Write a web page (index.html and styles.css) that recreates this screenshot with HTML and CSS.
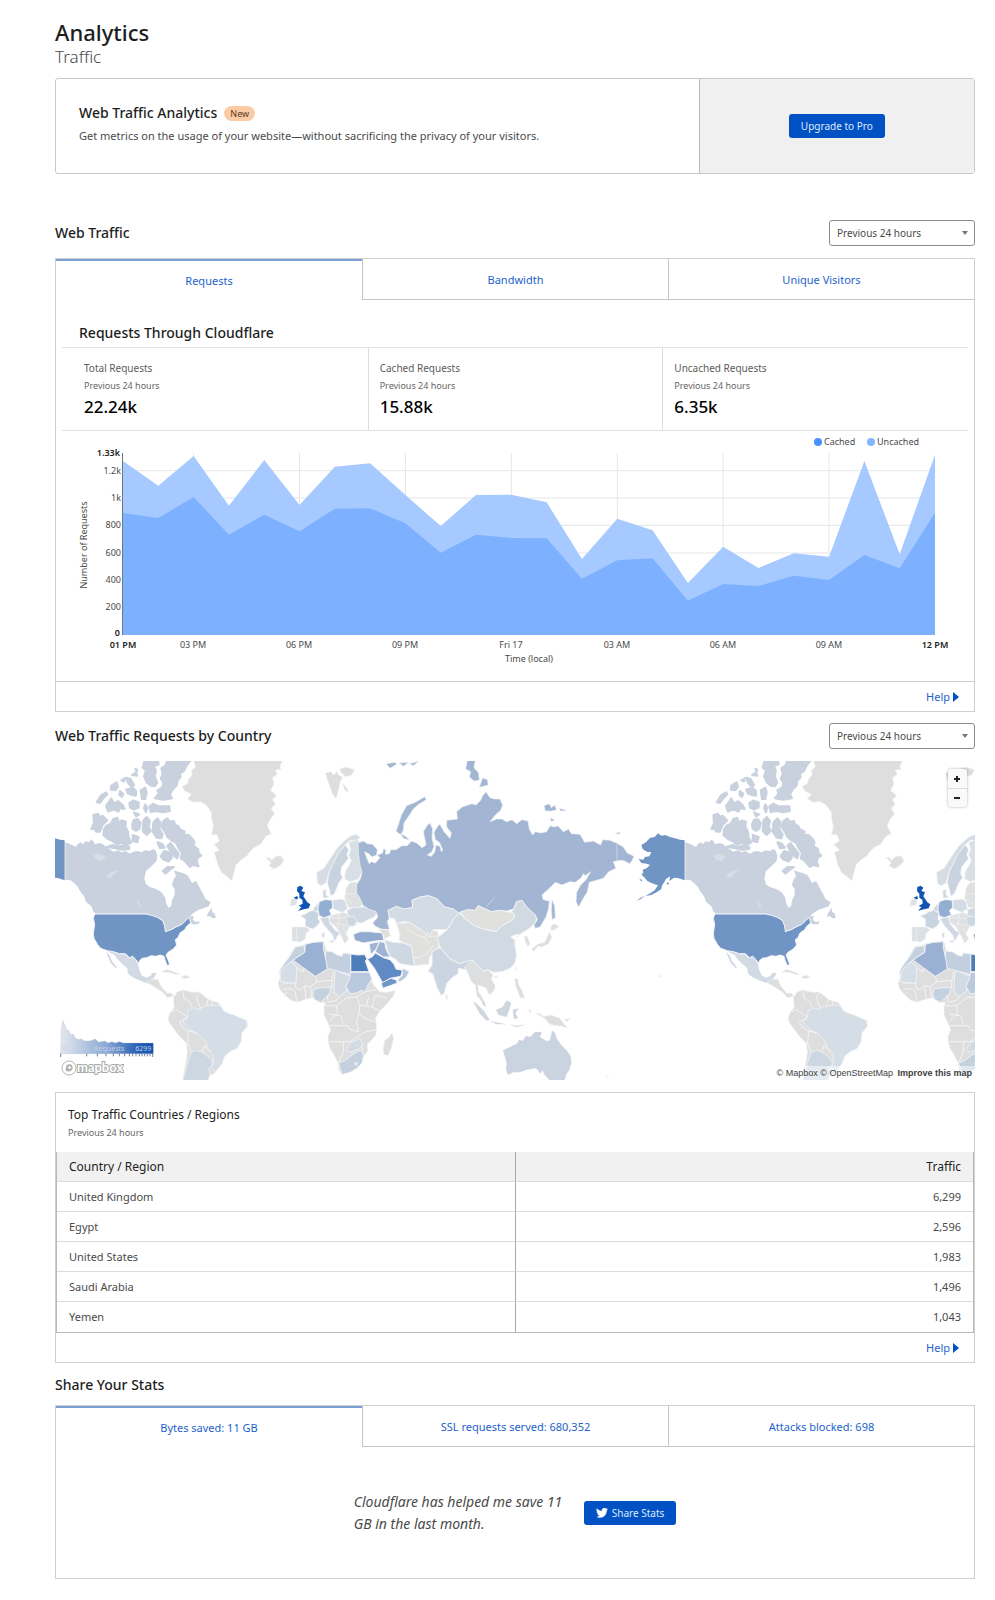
FILE: index.html
```html
<!DOCTYPE html>
<html lang="en">
<head>
  <meta charset="UTF-8" />
  <meta name="viewport" content="width=device-width, initial-scale=1.0"/>
  <title>Analytics | Traffic</title>
  <link rel="stylesheet" href="styles.css">
</head>
<body>
  <main class="page">
    <header class="page-header">
      <h1>Analytics</h1>
      <p class="subtitle">Traffic</p>
    </header>

    <section class="promo">
      <div class="promo-text">
        <h2>Web Traffic Analytics <span class="badge">New</span></h2>
        <p>Get metrics on the usage of your website—without sacrificing the privacy of your visitors.</p>
      </div>
      <div class="promo-action">
        <button class="btn" type="button">Upgrade to Pro</button>
      </div>
    </section>

    <div class="section-head">
      <h2>Web Traffic</h2>
      <div class="select">
        <select aria-label="Web traffic period">
          <option>Previous 24 hours</option>
        </select>
      </div>
    </div>

    <section class="panel">
      <div class="tabs">
        <button class="tab active" type="button">Requests</button>
        <button class="tab" type="button">Bandwidth</button>
        <button class="tab" type="button">Unique Visitors</button>
      </div>
      <h3 class="panel-title">Requests Through Cloudflare</h3>
      <div class="stats">
        <div class="stat">
          <p class="stat-label">Total Requests</p>
          <p class="small">Previous 24 hours</p>
          <p class="stat-value">22.24k</p>
        </div>
        <div class="stat">
          <p class="stat-label">Cached Requests</p>
          <p class="small">Previous 24 hours</p>
          <p class="stat-value">15.88k</p>
        </div>
        <div class="stat">
          <p class="stat-label">Uncached Requests</p>
          <p class="small">Previous 24 hours</p>
          <p class="stat-value">6.35k</p>
        </div>
      </div>

      <svg class="chart" viewBox="0 0 918 250" role="img" aria-label="Requests over time">
        <circle cx="762" cy="11" r="4" fill="#4693ff"/>
        <text x="768" y="14">Cached</text>
        <circle cx="815" cy="11" r="4" fill="#82b6ff"/>
        <text x="821" y="14">Uncached</text>

        <!-- plot area, one hour is 106 units wide -->
        <svg x="67" y="22" width="812" height="182" viewBox="0 0 2438 546" preserveAspectRatio="none">
          <path class="grid" d="M0 53H2438M0 135H2438M0 217H2438M0 300H2438M212 0V546M530 0V546M848 0V546M1166 0V546M1484 0V546M1802 0V546M2120 0V546"/>
          <path fill="#a6c9ff" d="M0 24L106 98 212 9 318 158 424 21 530 156 636 41 742 31 848 126 954 219 1060 126 1166 125 1272 148 1378 318 1484 197 1590 232 1696 390 1802 281 1908 345 2014 301 2120 311 2226 24 2332 304 2438 5V546H0z"/>
          <path fill="#7db1ff" d="M0 180L106 195 212 132 318 245 424 185 530 235 636 167 742 166 848 211 954 299 1060 245 1166 255 1272 256 1378 377 1484 322 1590 316 1696 443 1802 393 1908 399 2014 368 2120 381 2226 306 2332 346 2438 179V546H0z"/>
        </svg>
        <path d="M66.500 22V204" stroke="#6b7785"/>

        <g text-anchor="end">
          <text class="strong" x="64" y="25">1.33k</text>
          <text x="65" y="43">1.2k</text>
          <text x="65" y="70">1k</text>
          <text x="65" y="97">800</text>
          <text x="65" y="125">600</text>
          <text x="65" y="152">400</text>
          <text x="65" y="179">200</text>
          <text class="strong" x="64" y="205">0</text>
        </g>
        <g text-anchor="middle">
          <text class="strong" x="67" y="217">01 PM</text>
          <text x="137" y="217">03 PM</text>
          <text x="243" y="217">06 PM</text>
          <text x="349" y="217">09 PM</text>
          <text x="455" y="217">Fri 17</text>
          <text x="561" y="217">03 AM</text>
          <text x="667" y="217">06 AM</text>
          <text x="773" y="217">09 AM</text>
          <text class="strong" x="879" y="217">12 PM</text>
          <text x="473" y="231">Time (local)</text>
          <text transform="translate(31 114) rotate(-90)">Number of Requests</text>
        </g>
      </svg>

      <div class="panel-foot"><a class="help" href="#">Help</a></div>
    </section>

    <div class="section-head country-head">
      <h2>Web Traffic Requests by Country</h2>
      <div class="select">
        <select aria-label="Country traffic period">
          <option>Previous 24 hours</option>
        </select>
      </div>
    </div>

    <div class="map">
      <svg class="map-canvas" viewBox="15 18 2760 957" role="img" aria-label="Requests by country">
        <defs>
          <!-- one full turn of the globe is 1860 units wide -->
          <g id="world" stroke-linejoin="round">
            <g fill="#c8d1dd">
              <path d="M46 262L62 268 78 276 84 266 94 262 98 268 108 258 116 262 124 254 130 258 135 268 146 264 158 266 166 274 178 282 190 290 205 286 214 292 226 288 240 296 250 290 262 288 275 292 285 286 300 288 310 282 316 286 322 300 320 318 304 334 288 348 283 370 288 388 300 396 318 402 335 412 346 428 349 446 356 458 364 452 366 436 374 420 374 402 366 390 370 374 378 364 372 346 384 350 398 354 412 360 418 370 426 384 438 378 446 392 452 404 460 418 466 432 482 442 476 454 460 460 446 464 430 474 420 484 432 484 428 494 438 502 450 498 444 508 428 508 418 498 412 490 396 508 380 514 366 522 346 530 344 512 338 496 322 486 300 480 288 476H140L130 470 124 454 108 440 102 424 90 408 84 396 72 384 62 376 46 374z"/>
              <path d="M470 484L476 472 486 458 486 470 494 476 498 488 488 490 480 484z"/>
              <g stroke="#c8d1dd" stroke-width="6">
                <path d="M340 198L352 190 360 200 372 198 376 210 384 212 390 222 404 230 402 240 416 240 428 252 434 262 430 272 444 282 446 294 454 302 444 308 440 320 446 334 430 330 420 336 404 318 392 310 396 294 386 280 378 264 364 256 352 246 346 232 334 216z"/>
                <path d="M162 222L170 212 182 206 190 192 202 188 206 202 216 196 228 200 226 214 234 230 236 248 244 262 228 272 216 262 202 270 190 260 174 252 160 240z"/>
                <path d="M130 180L144 176 150 186 158 182 172 196 158 210 150 230 138 230 134 222 124 222 132 204z"/>
                <path d="M246 208L252 194 264 192 272 204 268 222 258 228 248 222zM280 196L290 186 300 198 296 214 302 228 290 240 278 228zM310 202L322 190 332 202 328 222 338 238 334 250 320 248 308 230z"/>
                <path d="M168 152L176 142 184 130 192 146 204 138 218 150 224 162 208 160 206 170 190 164 174 170z"/>
                <path d="M352 16H422L410 32 402 48 390 56 392 66 382 78 380 92 368 104 360 118 366 130 340 134 314 130 326 116 322 106 336 98 340 84 332 70 338 58 334 40 346 32z"/>
                <path d="M284 16H324L326 28 312 34 318 48 314 62 322 84 314 94 302 92 290 82 282 64 288 46 278 38z"/>
                <path d="M298 154L310 146 326 154 358 154 360 168 340 172 316 168 302 172zM228 68L242 72 252 90 246 96 234 84zM184 92L200 82 204 96 196 106 182 104zM140 142L152 122 168 112 172 118 160 130 150 144zM228 104L248 98 258 108 258 122 246 120 234 116zM272 106L286 98 290 112 286 132 276 132zM238 144L250 136 266 142 266 158 252 164 240 158zM332 304L342 288 356 292 366 308 356 320 340 314zM352 272L362 264 372 278 386 296 382 310 368 300zM248 240L266 246 262 262 248 258zM170 276L188 270 204 276 222 270 238 276 238 282 216 284 196 280zM256 42L262 44 260 50z"/>
                <path d="M246 60L258 52 262 62zM286 148L292 158 288 172 282 160zM210 108L220 116 216 126 208 120zM214 76L224 70 222 80zM338 348L352 336 372 336 360 344 346 356zM322 262L336 266 344 278 330 280zM252 172L268 178 258 184z"/>
              </g>
            </g>
            <path fill="#d5dde5" d="M130 302L144 294 154 300 168 304 156 318 140 316zM168 362L184 350 208 344 192 358 180 370zM260 434L266 438 276 458 268 456z"/>
            <path fill="#7095c4" stroke="#f4f6fa" stroke-width="3" d="M134 477H288L304 481 322 487 338 497 344 513 346 530 366 523 380 515 396 508 412 492 418 487 422 504 410 514 404 524 390 534 384 548 376 554 380 570 370 582 354 592 348 600 354 614 359 628 352 632 346 618 342 604 330 600 318 604 304 602 290 608 276 610 268 618 266 626 258 614 248 604 238 608 226 596H208L190 590 172 587 152 580 142 568 132 550 130 536 134 508 130 490z"/>
            <path fill="#d2dae4" d="M172 589L190 592 208 598H224L236 610 248 606 256 614 264 628 268 646 276 662 290 668 302 662 306 654 320 654 312 668 302 680 288 684 268 676 250 668 234 656 232 640 216 626 202 612 194 600zM168 590L180 602 186 618 202 638 196 638 182 624z"/>
            <g fill="#dedede" stroke="#f6f6f6" stroke-width="2">
              <path d="M290 684L304 674 324 672 330 688 338 700 350 714 364 714 372 724 352 728 338 712 322 702 304 690z"/>
              <path d="M334 652L350 643 372 650 394 660 376 658 354 652zM392 666L408 660 422 667 404 672z"/>
              <path d="M430 16H698L690 34 694 42 676 46 682 58 668 68 672 88 662 106 680 122 668 134 676 148 664 160 674 176 660 194 652 212 664 236 648 244 632 268 612 278 598 292 592 302 574 314 558 330 552 354 546 378 532 366 514 352 504 332 498 310 492 292 508 286 492 268 508 258 500 238 484 240 490 214 484 190 484 172 468 150 450 140 430 142 412 132 424 118 404 108 396 94 412 86 416 72 426 60 424 46 436 36z"/>
              <path d="M646 306L660 308 664 316 678 304 694 302 702 318 690 332 672 342 656 332 664 324z"/>
              <path d="M826 54L842 50 852 60 860 48 866 60 878 66 870 84 866 104 858 132 846 114 840 96 832 74zM868 42L888 36 914 44 906 60 888 66 874 54zM878 84L890 98 896 112 884 106z"/>
              <path d="M370 728L380 712 398 704 412 708 430 712 446 710 460 720 474 732 488 738 504 742 512 752 520 766 534 776 552 780 570 788 590 796 592 814 576 834 574 858 562 880 540 890 524 904 516 926 504 942 490 958 478 960 474 977H398L402 950 408 920 412 890 408 864 392 848 374 826 358 804 354 790 360 772 372 758z"/>
            </g>
            <path fill="#d5dee6" stroke="#f6f6f6" stroke-width="2" d="M414 768L430 758 448 764 462 754 480 752 500 750 512 754 524 770 552 780 570 788 590 796 592 814 576 834 574 858 562 880 540 890 524 904 516 926 504 942 496 950 484 938 492 916 488 898 474 884 468 864 452 844 436 832 420 824 404 808 398 796 412 786z"/>
            <path fill="#cdd7e2" stroke="#f6f6f6" stroke-width="2" d="M424 892L440 886 456 892 470 902 484 914 488 928 476 940 480 958 474 977H398L406 950 414 920z"/>
            <path fill="none" stroke="#f3f3f3" stroke-width="3" d="M398 706L402 730 420 740 424 758M446 712L440 730 452 760M474 734L470 752M488 740L486 750M360 772L378 764 412 786M412 790L388 800 400 820 416 828 412 870M416 828L440 834M412 862L424 892M456 892L462 872 484 890"/>

            <g fill="#dedede" stroke="#f4f4f4" stroke-width="2">
              <path d="M736 574L752 572 768 566 790 562 822 560 826 576 830 588 846 590 862 600 876 604 880 594 900 596 920 598 944 600 956 648 962 668 968 686 980 700 990 710 1010 712 1036 706 1030 724 1010 748 990 768 976 790 980 812 978 840 964 856 952 868 954 888 940 904 936 924 920 940 900 952 876 958 866 944 864 924 854 904 840 880 834 860 834 844 842 824 832 800 822 780 822 756 826 742 806 742 790 728 770 732 740 742 722 736 704 720 690 704 684 686 690 668 688 650 700 630 714 612 722 594z"/>
              <path d="M1004 856L1016 848 1026 834 1031 850 1024 880 1014 902 1000 898 1000 880z"/>
            </g>
            <path fill="none" stroke="#f4f4f4" stroke-width="3" d="M740 640L760 650 762 638 796 664 800 680 780 696 764 692 752 704 738 700 736 684 700 684M700 704L720 700 736 710 740 740M764 692L768 732M782 698L784 728M800 680L846 676 852 650M846 676L844 698M844 700L832 728 836 742 860 736 868 722M826 752H860L890 728 920 726 946 710 980 704M860 752L862 776 838 800M920 726L930 750 926 776 944 790 976 800M926 776L920 800 926 830 900 824 894 812 840 812M836 860H900L926 842 950 830 980 824M880 860V890L866 924M900 860L920 866 940 870M930 750L966 756 990 768M966 756L976 720 1010 730M940 884L930 866M838 778L872 782 880 806M956 724L950 750M700 722L712 712"/>
            <g stroke="#eef1f5" stroke-width="3">
              <path fill="#4e7dbb" d="M902 597L922 600 944 599 951 612 946 618 957 650H902z"/>
              <path fill="#c3cfdf" d="M826 588L846 590 862 600 876 604 880 594 902 597V658L862 648 832 640 826 620z"/>
              <path fill="#9ab1d3" d="M766 568L790 562 820 560 820 578 828 616 832 642 796 664 760 638 730 616 742 606 764 592z"/>
              <path fill="#c6d1df" d="M736 576L762 572 764 592 742 606 728 616 712 630 700 650 688 650 700 630 722 600z"/>
              <path fill="#d5dde6" d="M706 634L722 620 740 636 738 684 702 682 690 678 694 650z"/>
              <path fill="#c6d1df" d="M792 702L812 698 844 698 838 716 826 728 812 742 794 734 788 720z"/>
              <path fill="#d2dbe4" d="M856 646L902 664 892 690 890 708 868 724 852 712V690z"/>
              <path fill="#bbc9df" d="M902 652H958L966 672 954 690 946 710 934 706 920 714 900 716 888 694 898 672z"/>
              <path fill="#c5d0df" d="M866 924L886 916 906 900 934 884 940 904 936 924 920 940 900 952 876 958z"/>
              <path fill="#d2dae4" d="M888 884L904 862 930 850 938 868 926 882 900 892z"/>
            </g>
            <circle cx="918" cy="926" r="6" fill="#e2e7ed"/>

            <path fill="#1254b4" d="M742 396L752 392 760 398 754 408 765 412 760 424 768 436 772 442 781 448 776 460 762 463 744 467 754 457 746 452 758 446 757 434 748 428 748 416 741 408zM731 428L742 423 744 431 736 434z"/>
            <g fill="#dfe0e1" stroke="#f4f4f4" stroke-width="2">
              <path d="M722 436L732 430 742 436 738 450 720 454z"/>
              <path d="M888 400L898 384 916 380 936 400 942 446 924 460 896 458 884 430z"/>
              <path d="M842 482L880 472 912 488 920 510 898 516 888 536 896 552 884 566 872 540 858 516 838 500z"/>
            </g>
            <g stroke="#f1f3f6" stroke-width="2">
              <path fill="#d5dce4" d="M800 352L822 340 836 318 848 300 864 276 880 260 900 244 918 238 930 246 920 256 900 256 886 268 874 284 862 300 850 326 838 348 832 370 828 384 812 392 802 384z"/>
              <path fill="#c9d3df" d="M886 270L896 284 890 300 896 310 884 324 874 338 872 356 878 368 866 384 860 400 852 418 842 422 838 402 832 384 838 350 850 326 862 300 874 284z"/>
              <path fill="#d8dfe5" d="M896 262L920 254 930 262V290L934 310 940 340 926 372 900 380 884 372 886 348 898 330 904 316 896 300 902 284z"/>
              <path fill="#cfd8e2" d="M818 408L828 402 828 420 838 426 820 430zM790 462L804 444V468L796 472z"/>
              <path fill="#93aed3" d="M808 440L826 434 846 436 848 458 838 466 844 480 822 488 808 482 804 460z"/>
              <path fill="#c9d4e1" d="M790 466L806 474 804 492 810 500 802 512 788 522 766 514V492L750 482 766 478 774 472z"/>
              <path fill="#dbe0e5" d="M726 516L768 516 780 524 768 536 766 552 750 562 736 558 726 560V540z"/>
              <path fill="#d3dbe4" d="M848 436L876 432 888 440 892 462 876 472 850 462z"/>
              <path fill="#cfd8e3" d="M892 464L912 458 940 456 960 462 980 470 974 486 950 496 936 504 920 502 912 488 892 480z"/>
              <path fill="#d0d9e3" d="M810 490L836 486 840 506 856 526 870 534 862 544 854 560 848 540 834 524 820 508zM816 534L824 534 822 548 816 546zM836 558L852 556 848 564z"/>
              <path fill="#cdd7e2" d="M888 486L912 484 920 500 912 514 894 512z"/>
            </g>
            <path fill="none" stroke="#f4f4f4" stroke-width="2" d="M740 520V556M890 418L926 416M846 488L884 490M856 506L892 512M876 520L888 530M868 476L864 520M890 430L906 446"/>

            <!-- Asia, Oceania and Alaska -->
            <g transform="translate(900 0)">
              <g fill="#a2b5d2" stroke="#eef1f5" stroke-width="2">
                <path d="M24 264L40 258 52 266 68 268 82 284 80 300 66 306 56 296 44 290 50 308 58 326 64 320 76 324 90 308 82 300 98 294 100 282 108 284 106 298 118 296 122 284 138 284 156 272 172 272 184 258 200 264 216 278 228 270 224 250 220 230 232 210 240 204 248 222 246 250 252 274 246 290 232 300 244 304 254 292 258 270 270 274 274 290 278 284 268 262 256 254 252 232 264 212 270 208 282 230 300 250 304 234 290 216V196L322 192 320 170 336 156 366 146 378 150 392 136 398 122 408 110 420 128 434 132 450 132 458 150 452 166 436 180 420 200 440 192 456 192 470 200 486 194 500 206 516 194 534 198 538 222 548 240 556 230 572 234 590 230 600 212 614 216 624 212 640 230 656 222 664 236 690 238 704 262 730 258 752 270 758 254 780 256 800 264 820 276 832 294 852 304 846 318 838 326 824 318 812 316 790 320 798 340 776 350 760 370 740 376 718 382 712 410 700 430 686 456 678 440 680 412 692 390 708 374 722 350 706 362 700 356 694 368 676 382 660 380 636 390 616 382 596 402 576 420 580 434 598 438 596 460 588 486 570 516 556 520 552 510 562 494 556 480 530 456 516 436 500 440 490 462 470 468 450 466 424 470 402 460 384 452 376 466 352 464 326 474 310 462 284 456 262 432 236 422 210 426 186 436 188 458 160 462 140 454 114 466 118 488 112 500 118 522 106 528 76 514 68 504 84 486 78 470 56 462 40 452 30 430 20 414V388L32 370 36 350 30 330 26 300z"/>
                <path d="M224 125L229 134 206 148 190 162 176 184 162 204 160 226 152 240 138 228 146 206 154 180 170 152 196 142zM152 236L170 246 178 256 160 250zM352 16H376L372 38 386 54 388 76 372 78 358 66 362 50 347 42zM388 97L398 68 412 74 415 90zM582 152L598 146 604 158 614 150 620 164 606 168 586 168zM628 160L650 166 632 169zM600 188L614 194 604 200zM796 234L814 231 806 238zM606 434L614 452 616 488 606 494 604 460zM108 26L136 22 140 28 120 40zM148 24L176 22 160 34zM178 26L206 19 190 32z"/>
              </g>
              <path stroke="#dfe5ee" stroke-width="2" d="M801 266V320M410 454L436 426"/>
              <g stroke="#f1f3f6" stroke-width="3">
                <path fill="#e0e0df" d="M84 522L116 524 122 542 104 552 96 534zM140 506L180 502 214 524 262 528 270 560 260 590 240 604 236 628 194 632 188 600 184 572 160 562 146 556 150 540z"/>
                <path fill="#d3dce4" d="M114 466L140 454 160 462 188 458 186 436 210 426 236 422 262 432 284 456 310 462 326 474 312 490 300 510 290 524 250 524 236 544 214 524 200 516 180 502 158 500 140 506 134 492 118 488z"/>
                <path fill="#d1dae3" d="M312 490L328 474 344 490 372 512 400 522 440 530 456 512 480 500 494 486 480 474 492 462 500 440 516 436 530 456 556 480 560 496 550 510 530 526 512 536 500 548 508 538 494 540 482 546 496 556 494 566 500 600 494 626 480 640 456 650 430 652 414 644 396 650 386 634 370 620 350 624 330 626 300 612 284 594 270 576 262 548 290 526 302 508z"/>
                <path fill="#e0e0df" d="M330 472L352 464 376 466 384 452 402 460 424 470 450 466 490 474 494 486 480 500 456 512 440 530 400 522 372 512 346 490z"/>
                <path fill="#cbd5e1" d="M246 590L270 578 284 594 300 612 330 626 360 616 372 618 360 636 346 644 326 640 324 656 304 670 290 686 284 712 274 722 262 700 254 676 248 656 234 650 246 630z"/>
                <path fill="#ced8e2" d="M104 554L130 562 160 564 184 574 190 610 194 632 172 630 150 626 136 612 120 604 112 584z"/>
                <path fill="#93abd0" d="M10 538L30 530H60L96 534 102 556 76 558 40 564 14 556z"/>
                <path fill="#a0b5d5" d="M58 566L88 560 80 580 62 600zM88 560L104 562 108 582 120 606 100 606 76 590z"/>
                <path fill="#5f8ac3" d="M52 612L66 606 76 594 100 608 120 614 132 628 138 642 158 646 152 664 120 670 98 684 86 662 72 638z"/>
                <path fill="#6f96c9" d="M94 684L122 670 138 674 142 684 126 690 98 700z"/>
                <path fill="#b9c8de" d="M142 676L156 662 158 640 178 650 168 668 150 680z"/>
              </g>
              <path fill="none" stroke="#f1f1f1" stroke-width="3" d="M166 516L200 540 224 548 236 566M190 608L214 606 236 590 250 570M236 544L270 542M224 548L236 530"/>
              <g fill="#dddedf" stroke="#f6f6f6" stroke-width="2">
                <path d="M344 636L356 624 372 620 386 636 400 650 414 644 430 660 424 672 436 692 432 708 418 720 408 700 394 694 384 690 386 710 400 732 396 740 380 722 376 690 364 680 356 660z"/>
                <path d="M286 714L294 726 289 736zM604 512L612 506 628 514 612 526 600 524zM598 530L606 546 596 566 576 576 564 574 550 590 545 582 562 568 584 562zM522 544L532 544 541 568 532 574 526 560zM498 634L502 644 497 648zM432 664L444 662 438 670zM494 670L504 672 506 688 516 706 524 730 510 728 502 706 496 690zM536 762L544 766 540 778zM556 774L570 776 580 784 604 780 630 790 640 804 654 820 636 814 616 812 598 808 586 792zM640 794L662 790 652 800zM924 658L932 664 926 667zM766 958L776 972 770 968z"/>
              </g>
              <path fill="#cfd6df" d="M368 738L380 746 402 768 420 796 408 796 390 776zM392 730L404 740 408 758 398 748zM418 798L450 804 470 808 440 808zM438 764L458 756 470 736 484 744 478 764 470 786 446 780zM488 764L506 760 496 774 504 790 492 792zM476 808L500 812 530 808 500 816z"/>
              <path fill="#cad4e1" d="M459 886L480 876 500 866 508 854 518 858 528 842 540 846 556 830 576 832 570 846 590 858 600 856 606 827 614 832 620 850 634 870 650 886 662 904 664 924 658 944 648 960 644 975H598L584 960 578 946 572 956 558 940 530 944 510 952 490 952 474 960 468 944 470 924z"/>
              <path fill="#7095c4" d="M1004 256L990 254 975 250 960 246 946 240 934 242 924 235 914 246 900 248 888 262 874 270 878 282 890 290 904 292 898 304 884 306 880 314 866 312 874 324 890 326 900 330 890 340 878 344 880 354 874 358 884 368 892 378 904 384 914 388 924 391 914 406 902 414 886 423 904 420 920 412 934 402 936 392 948 372 960 364 958 378 972 368 986 370 1004 376z"/>
              <path fill="#7095c4" d="M884 422L870 430 860 438 874 431zM868 372L876 374 874 380zM950 382L958 384 952 390z"/>
            </g>
          </g>
        </defs>
        <use href="#world" x="-1860"/>
        <use href="#world"/>
        <use href="#world" x="1860"/>
      </svg>

      <div class="zoom">
        <button type="button" aria-label="Zoom in"><svg viewBox="0 0 10 10"><path d="M5 2V8M2 5H8"/></svg></button>
        <button type="button" aria-label="Zoom out"><svg viewBox="0 0 10 10"><path d="M2 5H8"/></svg></button>
      </div>

      <div class="map-corner">
        <svg class="scale" width="94" height="40" viewBox="0 0 282 120">
          <defs>
            <linearGradient id="ramp">
              <stop offset="0" stop-color="#e3e7ed"/>
              <stop offset=".5" stop-color="#89a8d5"/>
              <stop offset=".8" stop-color="#2c65b9"/>
              <stop offset="1" stop-color="#0f4eae"/>
            </linearGradient>
          </defs>
          <path fill="url(#ramp)" stroke="#a9b5c6" stroke-width="1" d="M2 104L4 36 8 4 14 18 20 34 26 34 32 48 40 46 46 58 56 62 64 60 72 66 90 66 106 60 116 70 134 66 144 72 156 68 166 72 178 68 190 72H280V104z"/>
          <path stroke="#24406c" stroke-width="2" d="M2 104V114M80 104V112M112 104V112M138 104V112M160 104V112M178 104V112M194 104V112M208 104V112M218 104V112M228 104V112M238 104V112M246 104V112M254 104V112M262 104V112M270 104V112M278 104V114"/>
          <g class="scale-text">
            <text x="8" y="96">0</text>
            <text x="148" y="96" text-anchor="middle">Requests</text>
            <text x="274" y="96" text-anchor="end">6299</text>
          </g>
        </svg>
        <a class="mapbox" href="#" aria-label="Mapbox">
          <svg width="64" height="18" viewBox="0 0 64 18">
            <circle cx="9" cy="9" r="7" fill="#fff" stroke="#b4b4b4"/>
            <path d="M6 12C5 6 8 4.500 11 5.500 14 7.500 12.500 11.500 10 12.200 8.500 12.600 7 12.400 6 12z" fill="#b0b0b0"/>
            <path d="M9.600 6.200L10.300 7.800 11.900 8.500 10.300 9.200 9.600 10.800 8.900 9.200 7.300 8.500 8.900 7.800z" fill="#fff"/>
            <text x="17" y="13">mapbox</text>
          </svg>
        </a>
      </div>

      <p class="attribution"><a href="#">© Mapbox</a> <a href="#">© OpenStreetMap</a> <a class="improve" href="#">Improve this map</a></p>
    </div>

    <section class="panel countries">
      <div class="countries-head">
        <h3>Top Traffic Countries / Regions</h3>
        <p class="small">Previous 24 hours</p>
      </div>
      <table>
        <thead>
          <tr><th scope="col">Country / Region</th><th scope="col">Traffic</th></tr>
        </thead>
        <tbody>
          <tr><td>United Kingdom</td><td>6,299</td></tr>
          <tr><td>Egypt</td><td>2,596</td></tr>
          <tr><td>United States</td><td>1,983</td></tr>
          <tr><td>Saudi Arabia</td><td>1,496</td></tr>
          <tr><td>Yemen</td><td>1,043</td></tr>
        </tbody>
      </table>
      <div class="panel-foot"><a class="help" href="#">Help</a></div>
    </section>

    <h2 class="share-title">Share Your Stats</h2>
    <section class="panel">
      <div class="tabs">
        <button class="tab active" type="button">Bytes saved: 11 GB</button>
        <button class="tab" type="button">SSL requests served: 680,352</button>
        <button class="tab" type="button">Attacks blocked: 698</button>
      </div>
      <div class="share">
        <p>Cloudflare has helped me save 11 GB in the last month.</p>
        <button class="btn" type="button">
          <svg width="12" height="10" viewBox="0 0 24 20"><path fill="#fff" d="M24 2.400a9.800 9.800 0 0 1-2.800.8A4.900 4.900 0 0 0 23.300.4a9.900 9.900 0 0 1-3.100 1.200 4.900 4.900 0 0 0-8.400 4.500A14 14 0 0 1 1.700.9a4.900 4.900 0 0 0 1.500 6.600 4.900 4.900 0 0 1-2.200-.6v.1a4.900 4.900 0 0 0 3.900 4.800 4.900 4.900 0 0 1-2.200.1 4.900 4.900 0 0 0 4.600 3.400A9.900 9.900 0 0 1 0 17.300a14 14 0 0 0 7.500 2.200c9.100 0 14.300-7.700 14-14.600A10 10 0 0 0 24 2.400z"/></svg>
          Share Stats
        </button>
      </div>
    </section>
  </main>
</body>
</html>
```
FILE: styles.css
```css
* {
  box-sizing: border-box;
}

body {
  margin: 0;
  font-family: "Noto Sans", "Open Sans", sans-serif;
  font-size: 11px;
  line-height: 18px;
  color: #4a4a4a;
  background-color: #fff;
}

h1, h2, h3, p {
  margin: 0;
}

h2, h3 {
  font-size: 14px;
  line-height: 20px;
  font-weight: 500;
  color: #1d1d1d;
}

a {
  color: #1d62cc;
  text-decoration: none;
}

button, select {
  font-family: inherit;
}

.page {
  padding: 17px 20px 22px 55px;
}

.page-header {
  margin-bottom: 11px;
}

h1 {
  font-size: 22px;
  line-height: 30px;
  font-weight: 500;
  color: #1d1d1d;
}

.subtitle {
  font-size: 17px;
  line-height: 20px;
  font-weight: 300;
}

.small {
  font-size: 9px;
  line-height: 18px;
  color: #666;
}

/* upgrade banner */
.promo {
  display: flex;
  min-height: 96px;
  border: 1px solid #c9c9c9;
  border-radius: 3px;
}

.promo-text {
  width: 70%;
  padding: 24px 23px;
}

.promo-text h2 {
  display: flex;
  align-items: center;
  gap: 7px;
  margin-bottom: 4px;
}

.badge {
  padding: 0 6px;
  border-radius: 8px;
  background-color: #fbcba5;
  color: #5b3a1e;
  font-size: 9px;
  line-height: 15px;
  font-weight: 400;
}

.promo-action {
  width: 30%;
  display: flex;
  align-items: center;
  justify-content: center;
  border-left: 1px solid #b9b9b9;
  background-color: #f0f0f0;
}

.btn {
  display: flex;
  align-items: center;
  gap: 4px;
  padding: 0 12px;
  border: none;
  border-radius: 3px;
  background-color: #0051c3;
  color: #dfeaff;
  font-size: 10px;
  line-height: 24px;
  cursor: pointer;
}

/* headings with a period picker */
.section-head {
  display: flex;
  align-items: center;
  justify-content: space-between;
  margin: 46px 0 12px;
}

.country-head {
  margin: 11px 0 12px;
}

.select {
  position: relative;
  width: 146px;
}

.select select {
  appearance: none;
  width: 100%;
  height: 26px;
  padding: 0 7px;
  border: 1px solid #8a8a8a;
  border-radius: 3px;
  background-color: #fff;
  color: #4a4a4a;
  font-size: 10px;
}

.select::after {
  content: "";
  position: absolute;
  top: 11px;
  right: 7px;
  border: 3px solid transparent;
  border-top: 4px solid #777;
  border-bottom: none;
  pointer-events: none;
}

/* panels */
.panel {
  border: 1px solid #cfcfcf;
}

.tabs {
  display: grid;
  grid-template-columns: repeat(3, 1fr);
}

.tab {
  height: 41px;
  padding: 0;
  border: solid #c6c6c6;
  border-width: 0 0 1px 1px;
  background: none;
  color: #1d62cc;
  font-size: 11px;
  cursor: pointer;
}

.tab.active {
  border: none;
  border-top: 2px solid #7a9fd6;
}

.panel-title {
  padding: 23px 23px 4px;
}

.stats {
  display: grid;
  grid-template-columns: repeat(3, 1fr);
  margin: 0 6px;
  padding: 0 11px;
  border: solid #e2e2e2;
  border-width: 1px 0;
}

.stat {
  padding: 11px;
}

.stat + .stat {
  border-left: 1px solid #dcdcdc;
}

.stat-label {
  font-size: 10px;
  color: #5c5c5c;
}

.stat-value {
  font-size: 17px;
  line-height: 24px;
  font-weight: 500;
  color: #000;
}

.chart {
  display: block;
  width: 100%;
  height: auto;
}

.chart text {
  font-size: 9px;
  fill: #4a4a4a;
}

.chart .strong {
  font-weight: 600;
  fill: #222;
}

.grid {
  fill: none;
  stroke: #e6e6e6;
  stroke-width: 3;
}

.panel-foot {
  display: flex;
  justify-content: flex-end;
  padding: 6px 15px 5px;
  border-top: 1px solid #cfcfcf;
}

.help {
  display: flex;
  align-items: center;
  gap: 3px;
}

.help::after {
  content: "";
  border: 5px solid transparent;
  border-left: 6px solid #0051c3;
  border-right: none;
}

/* map */
.map {
  position: relative;
  margin-bottom: 12px;
}

.map-canvas {
  display: block;
  width: 100%;
  height: auto;
}

.zoom {
  position: absolute;
  top: 8px;
  right: 8px;
  width: 19px;
  border-radius: 3px;
  background-color: #fafafa;
  box-shadow: 0 0 3px rgba(0, 0, 0, 0.3);
}

.zoom button {
  display: block;
  width: 19px;
  height: 19px;
  padding: 4px;
  border: none;
  background: none;
}

.zoom button + button {
  border-top: 1px solid #ddd;
}

.zoom svg {
  display: block;
  width: 10px;
  height: 10px;
  stroke: #222;
  stroke-width: 2;
}

.map-corner {
  position: absolute;
  left: 5px;
  bottom: 3px;
}

.map-corner svg {
  display: block;
}

.scale-text {
  font-size: 21px;
  fill: #c3cfe2;
}

.mapbox text {
  font-family: Lato, sans-serif;
  font-size: 13px;
  font-weight: 700;
  fill: #fff;
  stroke: #a9a9a9;
  stroke-width: 2;
  paint-order: stroke;
}

.attribution {
  position: absolute;
  right: 0;
  bottom: 0;
  padding: 0 3px;
  background-color: rgba(255, 255, 255, 0.5);
  font-family: "Liberation Sans", sans-serif;
  font-size: 9px;
  line-height: 14px;
}

.attribution a {
  color: #404040;
}

.attribution .improve {
  margin-left: 2px;
  font-weight: bold;
}

/* countries table */
.countries-head {
  padding: 13px 12px 10px;
}

.countries-head h3 {
  font-size: 12px;
  line-height: 18px;
  font-weight: 400;
}

table {
  width: 100%;
  border: 1px solid #b9b9b9;
  border-top: none;
  border-collapse: separate;
  border-spacing: 0;
  table-layout: fixed;
}

th, td {
  height: 30px;
  padding: 0 12px;
  border-bottom: 1px solid #dcdcdc;
  text-align: left;
}

th {
  background-color: #f1f1f1;
  color: #1d1d1d;
  font-size: 12px;
  font-weight: 400;
}

th + th, td + td {
  border-left: 1px solid #a9a9a9;
  text-align: right;
}

tbody tr:last-child td {
  border-bottom: none;
}

.countries .panel-foot {
  border-top: none;
}

/* share */
.share-title {
  margin: 12px 0 10px;
}

.share {
  display: flex;
  align-items: center;
  justify-content: center;
  gap: 18px;
  min-height: 131px;
}

.share p {
  width: 212px;
  font-size: 14px;
  line-height: 22px;
  font-style: italic;
}
```
